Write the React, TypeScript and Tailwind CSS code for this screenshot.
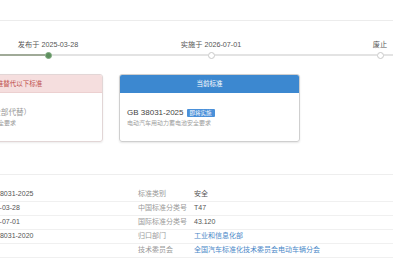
import React from "react";

const rows: [string, string, string, string, boolean][] = [
  ["标准号", "GB 38031-2025", "标准类别", "安全", false],
  ["发布日期", "2025-03-28", "中国标准分类号", "T47", false],
  ["实施日期", "2026-07-01", "国际标准分类号", "43.120", false],
  ["代替标准", "GB 38031-2020", "归口部门", "工业和信息化部", true],
  ["", "", "技术委员会", "全国汽车标准化技术委员会电动车辆分会", true],
];

function HollowDot() {
  return <div className="w-[7px] h-[7px] shrink-0 rounded-full bg-white border border-[#c8c8c8]" />;
}

export default function App() {
  return (
    <div className="w-[393px] h-[267px] overflow-hidden bg-white font-['Liberation_Sans','Noto_Sans_CJK_SC',sans-serif]">
      {/* top bar */}
      <div className="h-[21px] border-b border-[#ececec]" />

      {/* timeline */}
      <div className="pt-[19px]">
        <div className="flex text-[7.2px] leading-[10px] text-[#555] whitespace-nowrap">
          <div className="w-[100px] shrink-0 -ml-[2px] text-center">发布于 2025-03-28</div>
          <div className="w-[100px] shrink-0 ml-[63px] text-center">实施于 2026-07-01</div>
          <div className="w-[100px] shrink-0 ml-[69px] text-center">废止</div>
        </div>
        <div className="flex items-center h-[8px] mt-[1px]">
          <div className="w-[44.5px] h-[2px] shrink-0 bg-[#a0aa98]" />
          <div className="w-[7px] h-[7px] shrink-0 rounded-full bg-[#5e8f5e] border border-[#7faa7f]" />
          <div className="w-[156px] h-[2px] shrink-0 bg-[#e3e3e3]" />
          <HollowDot />
          <div className="w-[162px] h-[2px] shrink-0 bg-[#e3e3e3]" />
          <HollowDot />
          <div className="flex-1 h-[2px] bg-[#e3e3e3]" />
        </div>
      </div>

      {/* cards */}
      <div className="flex gap-[16px] -ml-[77px] mt-[15px] whitespace-nowrap">
        <div className="w-[180px] h-[68px] shrink-0 rounded-[3px] border border-[#e2d6d6] shadow-[0_1px_2px_rgba(0,0,0,0.08)] overflow-hidden flex flex-col">
          <div className="h-[18px] bg-[#f5dede] border-b border-[#ecd0d0] flex items-center justify-center text-[6.5px] text-[#c0504d]">
            本标准替代以下标准
          </div>
          <div className="flex-1 px-[8px] pt-[15px]">
            <div className="text-[7.6px] leading-[10px] text-[#999]">GB 38031-2020（全部代替）</div>
            <div className="text-[6px] leading-[8px] mt-[1px] text-[#999]">电动汽车用动力蓄电池安全要求</div>
          </div>
        </div>
        <div className="w-[181px] h-[68px] shrink-0 rounded-[3px] border border-[#cfcfcf] shadow-[0_1px_2px_rgba(0,0,0,0.1)] overflow-hidden flex flex-col">
          <div className="h-[18px] bg-[#3c88d0] flex items-center justify-center text-[6.5px] text-white">
            当前标准
          </div>
          <div className="flex-1 px-[7px] pt-[15px]">
            <div className="flex items-center h-[10px]">
              <span className="text-[8px] text-[#444]">GB 38031-2025</span>
              <span className="ml-[3px] h-[8px] px-[3px] rounded-[1px] bg-[#4a90d9] text-white text-[5.5px] leading-[8px]">即将实施</span>
            </div>
            <div className="text-[6px] leading-[8px] mt-[1px] text-[#a0a0a0]">电动汽车用动力蓄电池安全要求</div>
          </div>
        </div>
      </div>

      {/* table */}
      <div className="mt-[32px] border-t border-[#eeeeee] pt-[13px]">
        <div className="-ml-[72px] whitespace-nowrap">
          {rows.map((r, i) => (
            <div
              key={i}
              className="grid grid-cols-[56px_154px_56px_1fr] items-center h-[14px] border-b border-[#f0f0f0] text-[7px]"
            >
              <div className="text-[#999]">{r[0]}</div>
              <div className="text-[#555]">{r[1]}</div>
              <div className="text-[#999]">{r[2]}</div>
              <div className={r[4] ? "text-[#4a88c8]" : "text-[#555]"}>{r[3]}</div>
            </div>
          ))}
        </div>
      </div>
    </div>
  );
}
